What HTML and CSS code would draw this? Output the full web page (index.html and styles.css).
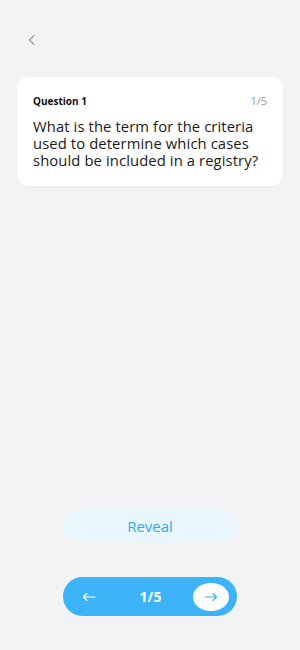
FILE: index.html
```html
<!DOCTYPE html>
<html lang="en">
<head>
    <meta charset="UTF-8">
    <meta name="viewport" content="width=device-width, initial-scale=1.0">
    <title>Flashcards</title>
    <link rel="stylesheet" href="styles.css">
</head>
<body>
    <div class="screen">
        <div class="top-bar">
            <button class="back-btn" aria-label="Back">
                <svg width="12" height="12" viewBox="0 0 12 12"><path d="M8 1.5 L3.5 6 L8 10.5" fill="none" stroke="#555" stroke-width="1" stroke-linecap="round" stroke-linejoin="round"/></svg>
            </button>
        </div>

        <div class="card">
            <div class="card-head">
                <span class="card-label">Question 1</span>
                <span class="card-count">1/5</span>
            </div>
            <p class="card-question">What is the term for the criteria used to determine which cases should be included in a registry?</p>
        </div>

        <div class="spacer"></div>

        <div class="actions">
            <button class="reveal-btn">Reveal</button>
            <div class="pager">
                <button class="pager-prev" aria-label="Previous">
                    <svg width="14" height="10" viewBox="0 0 14 10"><path d="M13 5 H1.5 M5 1.5 L1.5 5 L5 8.5" fill="none" stroke="#fff" stroke-width="1.1" stroke-linecap="round" stroke-linejoin="round"/></svg>
                </button>
                <span class="pager-count">1/5</span>
                <button class="pager-next" aria-label="Next">
                    <svg width="14" height="10" viewBox="0 0 14 10"><path d="M1 5 H12.5 M9 1.5 L12.5 5 L9 8.5" fill="none" stroke="#3db3f7" stroke-width="1.1" stroke-linecap="round" stroke-linejoin="round"/></svg>
                </button>
            </div>
        </div>
    </div>
</body>
</html>
```

FILE: styles.css
```css
html, body {
    margin: 0;
    padding: 0;
    height: 100%;
}
body {
    font-family: 'Open Sans', 'Liberation Sans', sans-serif;
    background: #f2f3f5;
    color: #111;
}
.screen {
    height: 650px;
    display: flex;
    flex-direction: column;
    padding: 0 17px;
    box-sizing: border-box;
}
.top-bar {
    height: 77px;
    display: flex;
    align-items: flex-start;
    padding-top: 34px;
    box-sizing: border-box;
}
.back-btn {
    background: none;
    border: none;
    padding: 0;
    margin-left: 9px;
    width: 12px;
    height: 12px;
    display: flex;
}
.card {
    background: #fff;
    border-radius: 11px;
    padding: 17px 16px 17px 16px;
    box-shadow: 0 1px 3px rgba(0,0,0,0.04);
}
.card-head {
    display: flex;
    justify-content: space-between;
    align-items: center;
    height: 13px;
}
.card-label {
    font-size: 10px;
    font-weight: 700;
    color: #111;
}
.card-count {
    font-size: 11px;
    color: #999;
}
.card-question {
    margin: 11px 0 0 0;
    font-size: 14.8px;
    line-height: 17px;
    color: #1a1a1a;
    letter-spacing: 0.1px;
}
.spacer {
    flex: 1;
}
.actions {
    display: flex;
    flex-direction: column;
    align-items: center;
    padding-bottom: 34px;
}
.reveal-btn {
    width: 174px;
    height: 32px;
    border: none;
    border-radius: 16px;
    background: #eaf6fd;
    color: #2fa9ee;
    font-family: inherit;
    font-size: 15px;
    font-weight: 500;
    margin-bottom: 35px;
}
.pager {
    width: 174px;
    height: 39px;
    border-radius: 20px;
    background: #3db3f7;
    display: flex;
    align-items: center;
    justify-content: space-between;
    padding: 0 8px 0 19px;
    box-sizing: border-box;
}
.pager-prev {
    background: none;
    border: none;
    padding: 0;
    display: flex;
}
.pager-count {
    color: #fff;
    font-weight: 700;
    font-size: 14px;
    margin-left: 12px;
}
.pager-next {
    width: 36px;
    height: 28px;
    border-radius: 50%;
    border: none;
    background: #fff;
    display: flex;
    align-items: center;
    justify-content: center;
    padding: 0;
}
```
